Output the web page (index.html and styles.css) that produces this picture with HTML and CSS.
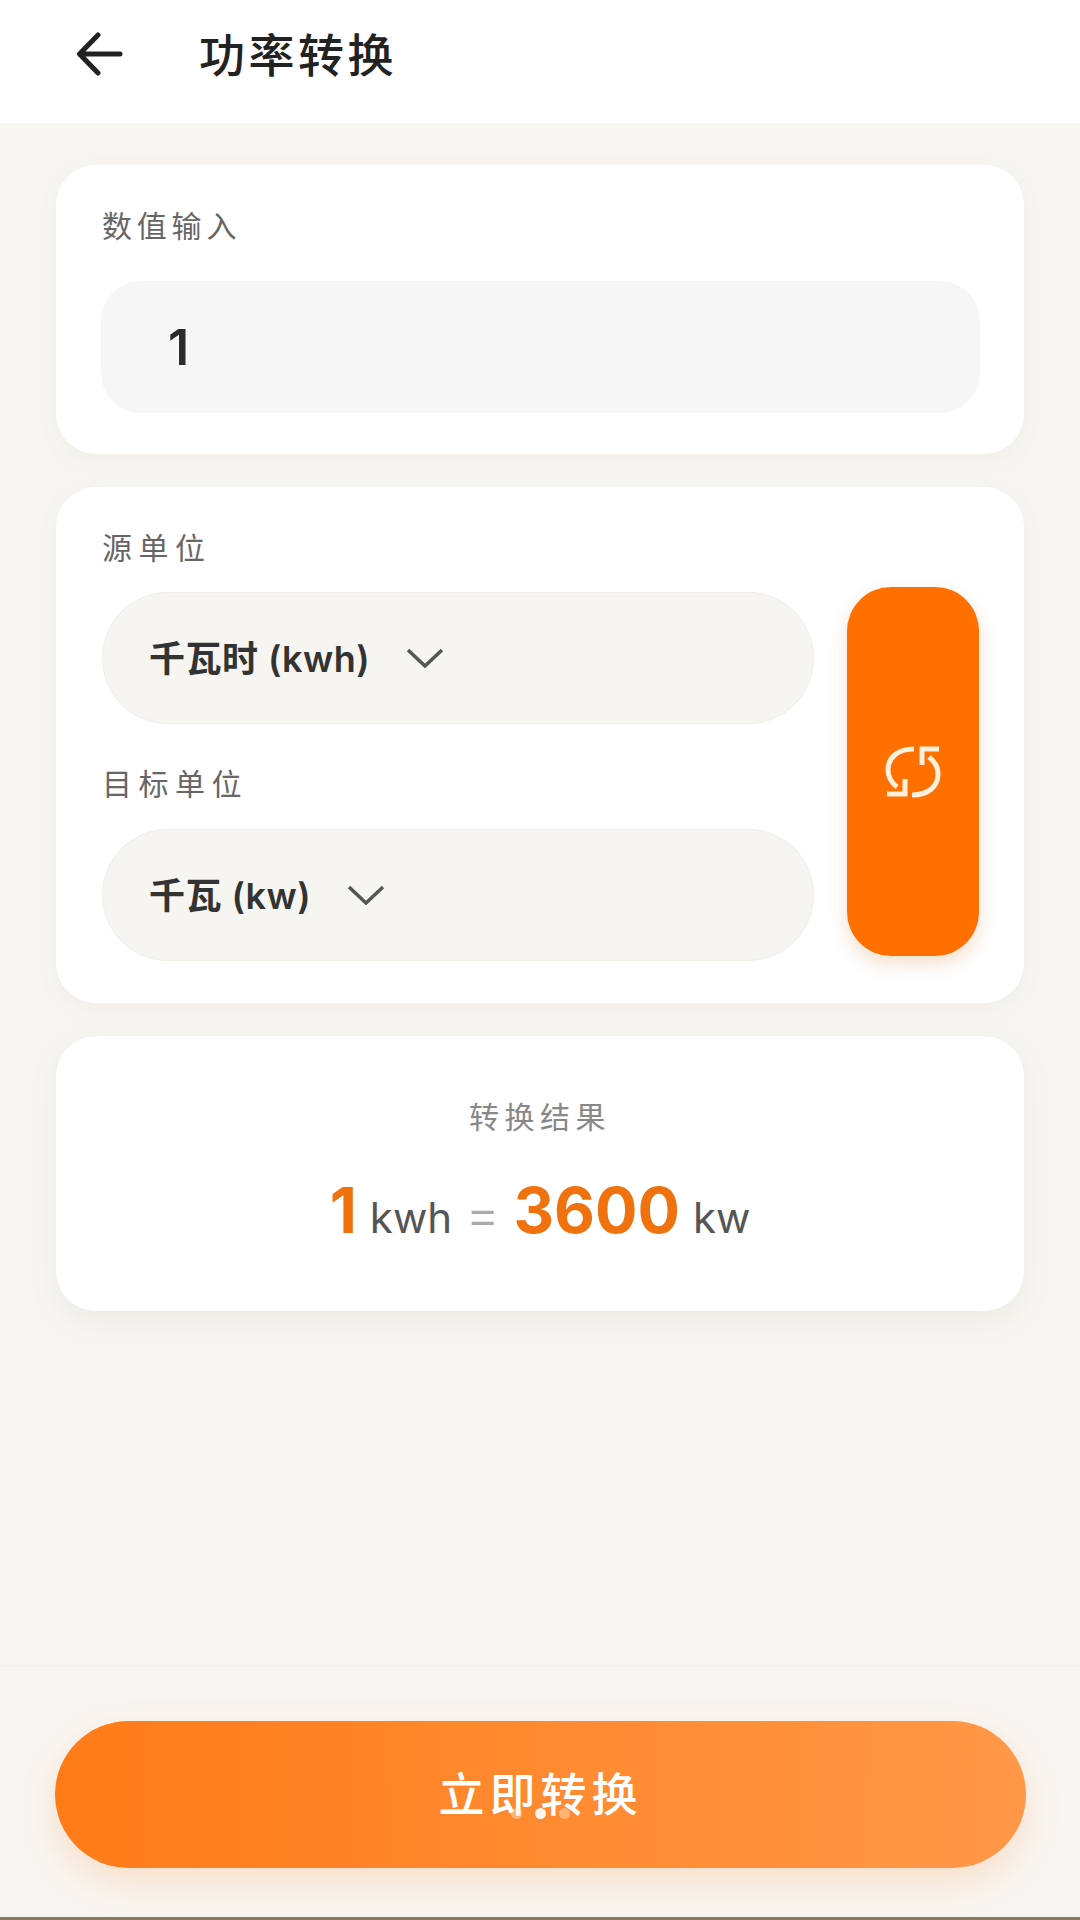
FILE: index.html
```html
<!DOCTYPE html>
<html>
<head>
	<meta charset="utf-8">
	<title>功率转换</title>
	<link rel="stylesheet" href="styles.css">
</head>
<body>
	<div class="page">
		<div class="header">
			<svg class="back" width="48" height="44" viewBox="0 0 48 44"><path d="M44 22H4M22 3L3.500 22L22 41" fill="none" stroke="#222" stroke-width="5" stroke-linecap="round" stroke-linejoin="round"/></svg>
			<div class="title">功率转换</div>
		</div>
		<div class="main">
			<div class="card card-input">
				<div class="label">数值输入</div>
				<div class="input">1</div>
			</div>
			<div class="card card-units">
				<div class="units">
					<div class="label">源单位</div>
					<div class="select">
						<span>千瓦时 (kwh)</span>
						<svg width="38" height="20" viewBox="0 0 38 20"><path d="M2 2L19 18L36 2" fill="none" stroke="#555" stroke-width="3.500"/></svg>
					</div>
					<div class="label label-second">目标单位</div>
					<div class="select">
						<span>千瓦 (kw)</span>
						<svg width="38" height="20" viewBox="0 0 38 20"><path d="M2 2L19 18L36 2" fill="none" stroke="#555" stroke-width="3.500"/></svg>
					</div>
				</div>
				<div class="swap">
					<svg width="56" height="52" viewBox="0 0 56 52"><g fill="none" stroke="#fdf0dc" stroke-width="5"><path d="M29 3C12 3 3 12 3 24C3 32 7 37 12 41"/><path d="M2 48H20V33"/><path d="M27 49C44 49 53 40 53 28C53 20 49 15 44 11"/><path d="M54 3H37V19"/></g></svg>
				</div>
			</div>
			<div class="card card-result">
				<div class="result-label">转换结果</div>
				<div class="result">
					<span class="num">1</span>
					<span class="unit">kwh</span>
					<span class="eq">=</span>
					<span class="num">3600</span>
					<span class="unit">kw</span>
				</div>
			</div>
		</div>
		<div class="footer">
			<div class="convert">
				立即转换
				<div class="dots"><i></i><i class="on"></i><i></i></div>
			</div>
		</div>
	</div>
</body>
</html>
```

FILE: styles.css
```css
*{margin: 0;padding: 0;box-sizing: border-box;}
body{font-family: "Inter","Noto Sans CJK SC",sans-serif;background: #f8f6f2;}
.page{width: 1080px;height: 1920px;display: flex;flex-direction: column;border-bottom: 3px solid #8a7a63;}
.header{height: 123px;background: #fff;display: flex;align-items: center;padding-left: 76px;flex-shrink: 0;}
.back{margin-top: -16px;}
.title{font-size: 46px;color: #222;letter-spacing: 3.500px;margin-left: 75px;margin-top: -20px;font-weight: 500;}
.main{flex: 1;padding: 42px 56px 0;display: flex;flex-direction: column;gap: 33px;}
.card{background: #fff;border-radius: 40px;box-shadow: 0 6px 24px rgba(120,100,70,.05);}
.card-input{height: 289px;padding: 43px 44px 0 45px;}
.label{font-size: 30px;line-height: 36px;color: #666;letter-spacing: 4.800px;margin-left: 1px;}
.input{height: 132px;margin-top: 37px;background: #f6f6f6;border-radius: 40px;padding-left: 67px;font-size: 50px;line-height: 132px;font-weight: 600;color: #2b2b2b;}
.card-units{height: 516px;padding: 43px 45px 0 44px;display: flex;gap: 33px;}
.units{flex: 1;}
.units .label{margin-left: 2px;letter-spacing: 6.500px;}
.select{height: 132px;margin-top: 26px;margin-left: 2px;border-radius: 66px;background: #f6f5f1;box-shadow: inset 0 0 0 1px #f1efe9;padding-left: 47px;display: flex;align-items: center;gap: 36px;font-size: 36px;font-weight: 600;color: #333;}
.select span{padding-bottom: 4px;letter-spacing: .5px;}
.units .label-second{margin-top: 42px;margin-bottom: 27px;}
.label-second + .select{margin-top: 0;}
.swap{width: 132px;height: 369px;margin-top: 57px;background: #ff7000;border-radius: 44px;display: flex;align-items: center;justify-content: center;box-shadow: 0 8px 18px rgba(200,110,30,.22);}
.card-result{height: 275px;padding-top: 63px;text-align: center;box-shadow: 0 10px 32px rgba(120,100,70,.08);}
.result-label{font-size: 30px;line-height: 36px;color: #888;letter-spacing: 5.500px;}
.result{margin-top: 37px;display: flex;justify-content: center;align-items: baseline;gap: 13px;color: #555;}
.num{font-size: 63px;font-weight: 700;color: #f0720f;}
.unit{font-size: 42px;}
.eq{font-size: 54px;line-height: 1;font-weight: 300;color: #aaa;}
.footer{height: 252px;flex-shrink: 0;border-top: 1px solid #f3f1ed;padding: 55px 54px 0 55px;}
.convert{position: relative;height: 147px;border-radius: 74px;background: linear-gradient(90deg,#ff7b18,#ff9848);box-shadow: 0 14px 36px rgba(255,130,40,.2);text-align: center;line-height: 147px;color: #fff;font-size: 46px;letter-spacing: 5px;font-weight: 500;}
.dots{position: absolute;left: 0;right: 0;top: 87px;display: flex;justify-content: center;gap: 13px;}
.dots i{width: 11px;height: 11px;border-radius: 50%;background: rgba(255,240,225,.4);}
.dots i.on{background: #fff5ec;}
```
